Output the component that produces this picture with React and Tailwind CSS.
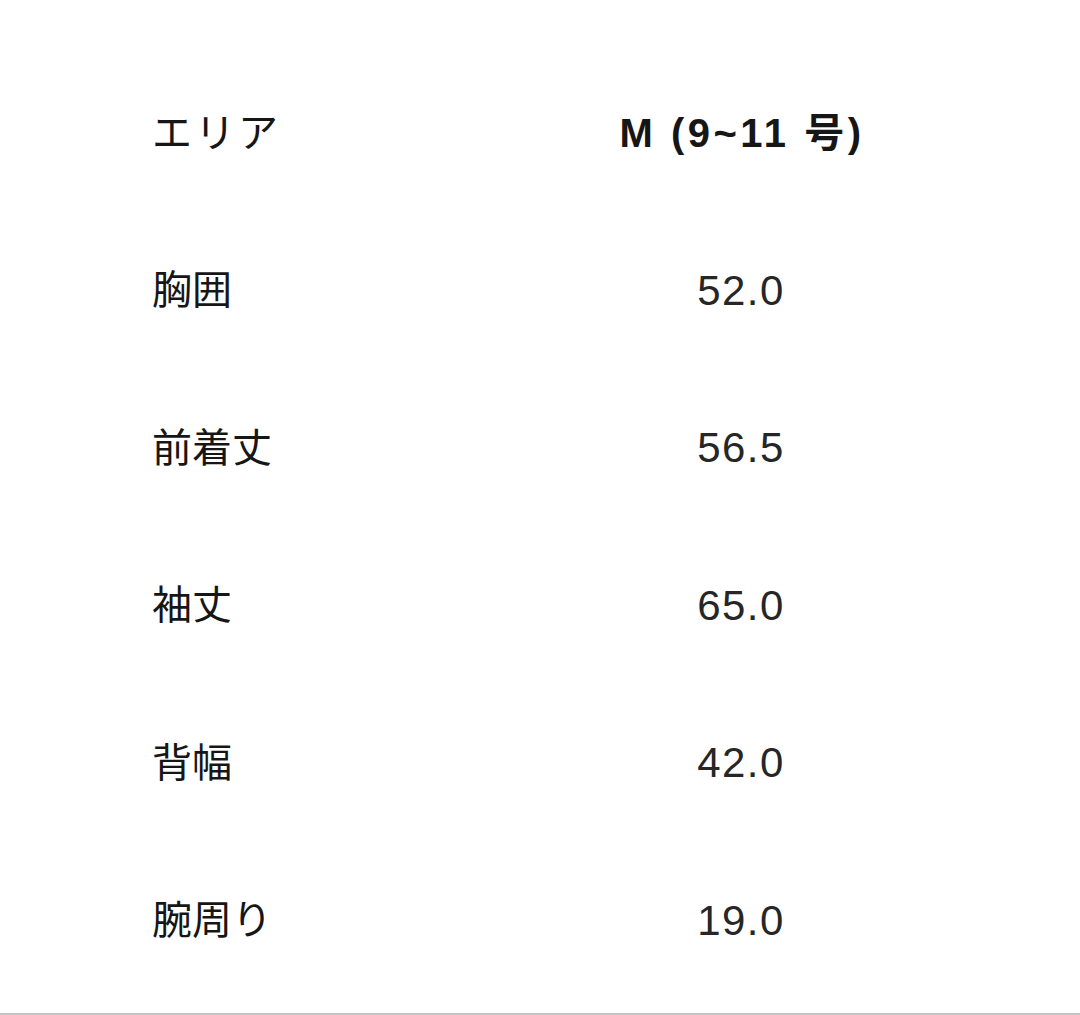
const rows = [
  { label: '胸囲', value: '52.0' },
  { label: '前着丈', value: '56.5' },
  { label: '袖丈', value: '65.0' },
  { label: '背幅', value: '42.0' },
  { label: '腕周り', value: '19.0' },
];

const App = () => {
  return (
    <div className="h-[1015px] w-[1080px] border-b-2 border-[#c4c4c4] bg-white pt-[54px] font-['Liberation_Sans','Noto_Sans_CJK_JP',sans-serif] text-[#161616]">
      <div className="flex h-[157.5px] items-center pl-[152px]">
        <div className="w-[248px] text-[40px] tracking-[3px]">エリア</div>
        <div className="flex-1 pl-[4px] text-center text-[40px] font-bold tracking-[3.5px]">M (9~11 号)</div>
      </div>
      {rows.map((row) => (
        <div key={row.label} className="flex h-[157.5px] items-center pl-[152px]">
          <div className="w-[248px] text-[40px]">{row.label}</div>
          <div className="flex-1 pl-[2px] text-center text-[42px] tracking-[1.5px] text-[#262626]">{row.value}</div>
        </div>
      ))}
    </div>
  );
};

export default App;
